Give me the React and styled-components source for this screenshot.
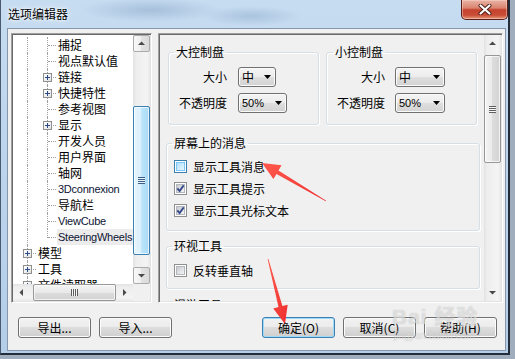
import React from 'react';
import styled, { createGlobalStyle, css } from 'styled-components';

const cjk = `"Noto Sans CJK SC", "Liberation Sans", sans-serif`;
const latin = `"Liberation Sans", "Noto Sans CJK SC", sans-serif`;

const GlobalStyle = createGlobalStyle`
  html, body { margin: 0; padding: 0; }
  body {
    width: 515px;
    height: 359px;
    overflow: hidden;
    background: #9fadbd;
    font-family: ${cjk};
    font-size: 12px;
    color: #000;
  }
`;

/* ---------- window frame ---------- */
const Stage = styled.div`
  position: relative;
  width: 515px;
  height: 359px;
`;

const Window = styled.div`
  box-sizing: border-box;
  width: 510px;
  height: 355px;
  display: flex;
  flex-direction: column;
  padding: 0 2px 2px 6px;
  border-left: 1px solid #4a5a6e;
  border-right: 2px solid #232c38;
  border-bottom: 2px solid #232c38;
  background:
    radial-gradient(ellipse 70px 12px at 150px 10px, rgba(110, 140, 178, 0.35), transparent),
    radial-gradient(ellipse 50px 10px at 250px 16px, rgba(110, 140, 178, 0.3), transparent),
    linear-gradient(180deg, #c6dcf1 0%, #bdd5ed 40%, #b5cee8 100%);
`;

const TitleBar = styled.div`
  flex: none;
  height: 28px;
  display: flex;
  align-items: flex-start;
  justify-content: space-between;
  margin: 0 -2px 0 -6px;
  padding-left: 7px;
`;

const Title = styled.span`
  line-height: 28px;
  font-size: 12px;
  text-shadow: 0 0 6px #fff, 0 0 3px #fff;
`;

const CloseButton = styled.div`
  width: 47px;
  height: 20px;
  box-sizing: border-box;
  display: flex;
  align-items: center;
  justify-content: center;
  border: 1px solid #5a1f19;
  border-top: none;
  border-radius: 0 0 5px 5px;
  background: linear-gradient(180deg, #e9b4a6 0%, #d9836f 42%, #c5422e 52%, #c94e36 80%, #e49a7c 100%);
  box-shadow: inset 0 0 0 1px rgba(255, 220, 210, 0.45);
`;

const Client = styled.div`
  flex: 1;
  display: flex;
  flex-direction: column;
  background: #f0f0f0;
  border: 1px solid #8596ad;
  padding: 4px 2px 0 3px;
`;

const Main = styled.div`
  flex: none;
  height: 270px;
  display: flex;
  gap: 6px;
`;

const sunken = css`
  box-sizing: border-box;
  border: 1px solid;
  border-color: #a0a0a0 #ffffff #ffffff #a0a0a0;
  padding: 1px;
  box-shadow: inset 1px 1px 0 #696969, inset -1px -1px 0 #e3e3e3;
`;

/* ---------- tree ---------- */
const TreeBox = styled.div`
  ${sunken};
  width: 141px;
  background: #fff;
  display: grid;
  grid-template-columns: 1fr 17px;
  grid-template-rows: 1fr 17px;
`;

const TreeBody = styled.div`
  overflow: hidden;
  padding: 2px 0 0 4px;
  display: flex;
  flex-direction: column;
`;

const TreeRow = styled.div`
  flex: none;
  height: 16px;
  display: flex;
  white-space: nowrap;
`;

const TreeCell = styled.span`
  position: relative;
  flex: none;
  width: 20px;
  height: 16px;

  &::before {
    content: '';
    position: absolute;
    left: 10px;
    top: 0;
    height: ${p => (p.$kind === 'end' ? '9px' : '16px')};
    border-left: 1px dotted #a0a0a0;
  }

  &::after {
    content: '';
    display: ${p => (p.$kind === 'line' ? 'none' : 'block')};
    position: absolute;
    left: 11px;
    top: 8px;
    width: 8px;
    border-top: 1px dotted #a0a0a0;
  }
`;

const Expander = styled.span`
  position: absolute;
  z-index: 1;
  left: 6px;
  top: 4px;
  width: 9px;
  height: 9px;
  box-sizing: border-box;
  border: 1px solid #8f8f8f;
  background: linear-gradient(135deg, #ffffff, #e2e2e2);

  &::before,
  &::after {
    content: '';
    position: absolute;
    background: #2c4a8a;
  }
  &::before { left: 1px; top: 3px; width: 5px; height: 1px; }
  &::after { left: 3px; top: 1px; width: 1px; height: 5px; }
`;

const NodeText = styled.span`
  height: 16px;
  line-height: 16px;
  padding: 0 1px;
  font-family: ${p => (p.$latin ? latin : cjk)};
  font-size: ${p => (p.$latin ? '11px' : '12px')};
  letter-spacing: ${p => (p.$latin ? '-0.25px' : '0')};
  color: ${p => (p.$latin ? '#0c1433' : '#000')};
  background: ${p => (p.$selected ? '#ececec' : 'transparent')};
`;

/* ---------- scrollbars ---------- */
const ScrollV = styled.div`
  min-height: 0;
  width: 17px;
  display: flex;
  flex-direction: column;
  background: linear-gradient(90deg, #e2e2e2 0%, #eeeeee 18%, #f4f4f4 82%, #e8e8e8 100%);
`;

const ScrollH = styled.div`
  min-width: 0;
  height: 17px;
  display: flex;
  background: linear-gradient(180deg, #e2e2e2 0%, #eeeeee 18%, #f4f4f4 82%, #e8e8e8 100%);
`;

const ScrollButton = styled.div`
  flex: none;
  width: 17px;
  height: 17px;
  box-sizing: border-box;
  display: flex;
  align-items: center;
  justify-content: center;
  border-radius: 2px;
  ${p => p.$end && (p.$horizontal ? css`margin-left: auto;` : css`margin-top: auto;`)}
  ${p =>
    p.$hot &&
    css`
      border: 1px solid #ababab;
      background: linear-gradient(90deg, #f8f8f8 0%, #eeeeee 50%, #e2e2e2 50%, #dadada 100%);
    `}
`;

const ArrowSvg = styled.svg`
  transform: rotate(${p => ({ up: 0, right: 90, down: 180, left: 270 }[p.$dir])}deg);
`;

function ScrollArrow({ dir }) {
  return (
    <ArrowSvg $dir={dir} width="7" height="7" viewBox="0 0 7 7">
      <polygon points="0,5 7,5 3.5,1.5" fill="#4a4a4a" />
    </ArrowSvg>
  );
}

const Thumb = styled.div`
  flex: none;
  box-sizing: border-box;
  display: flex;
  align-items: center;
  justify-content: center;
  border-radius: 2px;
  box-shadow: inset 0 0 0 1px rgba(255, 255, 255, 0.7);
  ${p =>
    p.$horizontal
      ? css`height: 17px; width: ${p.$size}px; margin-left: ${p.$offset}px;`
      : css`width: 17px; height: ${p.$size}px; margin-top: ${p.$offset}px;`}
  border: 1px solid ${p => (p.$hot ? '#3c7fb1' : '#979797')};
  background: ${p => {
    const d = p.$horizontal ? '180deg' : '90deg';
    return p.$hot
      ? `linear-gradient(${d}, #e5f5fd 0%, #d9f0fc 50%, #bee6fd 50%, #a7d9f5 100%)`
      : `linear-gradient(${d}, #f4f4f4 0%, #e9e9e9 50%, #dcdcdc 50%, #d3d3d3 100%)`;
  }};
`;

const Gripper = styled.span`
  display: block;
  width: 7px;
  height: 7px;
  background: repeating-linear-gradient(
    ${p => (p.$horizontal ? '90deg' : '180deg')},
    ${p => (p.$hot ? '#3b5b82' : '#5f5f5f')} 0 1px,
    ${p => (p.$hot ? '#e8f6fd' : '#f6f6f6')} 1px 2px
  );
`;

const Corner = styled.div`
  background: #f0f0f0;
`;

/* ---------- options panel ---------- */
const OptionsPanel = styled.div`
  ${sunken};
  flex: 1;
  display: flex;
  background: #f0f0f0;
  overflow: hidden;
`;

const PanelBody = styled.div`
  flex: 1;
  min-width: 0;
  overflow: hidden;
  display: flex;
  flex-direction: column;
  padding: 9px 4px 0 6px;
`;

const GroupRow = styled.div`
  flex: none;
  display: grid;
  grid-template-columns: 151px 151px;
  column-gap: 7px;
  margin-left: 2px;
`;

const Group = styled.fieldset`
  flex: none;
  margin: ${p => p.$mt || 0}px 0 0;
  padding: 0;
  min-inline-size: 0;
  border: 1px solid #d5dfe5;
  border-radius: 3px;
  box-shadow: inset 1px 1px 0 #fff, 1px 1px 0 #fff;
`;

const GroupTitle = styled.legend`
  margin-left: ${p => p.$ml ?? 5}px;
  padding: 0 2px;
  font-size: 12px;
  line-height: 16px;
`;

const FieldGrid = styled.div`
  display: grid;
  grid-template-columns: 48px auto;
  column-gap: ${p => p.$gap}px;
  row-gap: 6px;
  align-items: center;
  justify-items: start;
  padding: 7px 0 11px 10px;
`;

const FieldLabel = styled.span`
  justify-self: end;
  line-height: 20px;
`;

const Combo = styled.div`
  width: ${p => p.$w}px;
  height: 20px;
  box-sizing: border-box;
  display: flex;
  align-items: center;
  justify-content: space-between;
  padding: 0 4px 0 3px;
  border: 1px solid #707070;
  border-radius: 3px;
  background: linear-gradient(180deg, #f4f4f4 0%, #ececec 50%, #dfdfdf 50%, #d2d2d2 100%);
  box-shadow: inset 0 0 0 1px #fbfbfb;
`;

const ComboValue = styled.span`
  font-family: ${p => (p.$latin ? latin : cjk)};
  font-size: ${p => (p.$latin ? '11px' : '12px')};
  line-height: 18px;
`;

const CheckList = styled.div`
  padding: ${p => p.$pad};
`;

const CheckRow = styled.label`
  display: flex;
  align-items: center;
  gap: 6px;
  height: 22px;
  padding-left: 7px;
`;

const CheckBox = styled.span`
  position: relative;
  flex: none;
  width: 13px;
  height: 13px;
  box-sizing: border-box;
  padding: 1px;
  border: 1px solid ${p => (p.$state === 'hover' ? '#3c7fb1' : '#8e8f8f')};
  background: #fff;
`;

const BoxInner = styled.span`
  display: block;
  width: 9px;
  height: 9px;
  box-sizing: border-box;
  ${p =>
    p.$state === 'hover'
      ? css`
          border: 1px solid #79c6f9;
          background: linear-gradient(135deg, #b1dffd 0%, #e9f7fe 100%);
        `
      : css`
          border: 1px solid #b4b8bd;
          background: linear-gradient(135deg, #c6cacf 0%, #f5f5f5 100%);
        `}
`;

const CheckMark = styled.svg`
  position: absolute;
  left: -1px;
  top: -1px;
`;

/* ---------- buttons ---------- */
const ButtonBar = styled.div`
  flex: none;
  display: flex;
  gap: 8px;
  margin-top: 14px;
  padding: 0 6px 0 7px;
`;

const ButtonGroup = styled.div`
  display: flex;
  gap: 8px;
  margin-left: auto;
`;

const DialogButton = styled.button`
  width: 73px;
  height: 21px;
  padding: 0;
  box-sizing: border-box;
  font-family: ${cjk};
  font-size: 12px;
  line-height: 19px;
  color: #000;
  border: 1px solid ${p => (p.$default ? '#3c7fb1' : '#707070')};
  border-radius: 3px;
  background: linear-gradient(180deg, #f2f2f2 0%, #ebebeb 50%, #dddddd 50%, #cfcfcf 100%);
  box-shadow: inset 0 0 0 1px ${p => (p.$default ? '#9bdaf8' : '#fcfcfc')};
`;

/* ---------- annotations ---------- */
const Overlay = styled.svg`
  position: absolute;
  left: 0;
  top: 0;
  pointer-events: none;
`;

const Watermark = styled.div`
  position: absolute;
  left: 392px;
  top: 304px;
  display: flex;
  flex-direction: column;
  align-items: flex-start;
  color: rgba(255, 255, 255, 0.55);
  text-shadow: 0 0 1px rgba(110, 110, 110, 0.45);
  pointer-events: none;
`;

const WatermarkLogo = styled.span`
  font-family: ${latin};
  font-size: 21px;
  font-weight: bold;
  line-height: 26px;
  letter-spacing: 1px;
`;

const WatermarkUrl = styled.span`
  font-family: ${latin};
  font-size: 10px;
  line-height: 12px;
  margin-left: 2px;
`;

function arrowPoints(tail, tip, headLen, headHalf, tailW, neckW) {
  const [tx, ty] = tail;
  const [hx, hy] = tip;
  const len = Math.hypot(hx - tx, hy - ty);
  const ux = (hx - tx) / len;
  const uy = (hy - ty) / len;
  const nx = -uy;
  const ny = ux;
  const bx = hx - ux * headLen;
  const by = hy - uy * headLen;
  const p = (x, y) => `${x.toFixed(1)},${y.toFixed(1)}`;
  return [
    p(tx + (nx * tailW) / 2, ty + (ny * tailW) / 2),
    p(bx + (nx * neckW) / 2, by + (ny * neckW) / 2),
    p(bx + nx * headHalf, by + ny * headHalf),
    p(hx, hy),
    p(bx - nx * headHalf, by - ny * headHalf),
    p(bx - (nx * neckW) / 2, by - (ny * neckW) / 2),
    p(tx - (nx * tailW) / 2, ty - (ny * tailW) / 2),
  ].join(' ');
}

/* ---------- data ---------- */
const treeRows = [
  { cells: ['line', 'tee'], text: '捕捉' },
  { cells: ['line', 'tee'], text: '视点默认值' },
  { cells: ['line', 'tee'], text: '链接', plus: true },
  { cells: ['line', 'tee'], text: '快捷特性', plus: true },
  { cells: ['line', 'tee'], text: '参考视图' },
  { cells: ['line', 'tee'], text: '显示', plus: true },
  { cells: ['line', 'tee'], text: '开发人员' },
  { cells: ['line', 'tee'], text: '用户界面' },
  { cells: ['line', 'tee'], text: '轴网' },
  { cells: ['line', 'tee'], text: '3Dconnexion', latin: true },
  { cells: ['line', 'tee'], text: '导航栏' },
  { cells: ['line', 'tee'], text: 'ViewCube', latin: true },
  { cells: ['line', 'end'], text: 'SteeringWheels', latin: true, selected: true },
  { cells: ['tee'], text: '模型', plus: true },
  { cells: ['tee'], text: '工具', plus: true },
  { cells: ['tee'], text: '文件读取器', plus: true },
];

const wheels = [
  { title: '大控制盘', ml: 5, gap: 11, sizeW: 38, opacityW: 49 },
  { title: '小控制盘', ml: 6, gap: 10, sizeW: 50, opacityW: 50 },
];

function Check({ state }) {
  return (
    <CheckBox $state={state}>
      <BoxInner $state={state} />
      {state === 'checked' && (
        <CheckMark width="13" height="13" viewBox="0 0 13 13">
          <path d="M3.3 6.3 L5.6 9 L9.7 3.4" fill="none" stroke="#34478a" strokeWidth="1.8" />
        </CheckMark>
      )}
    </CheckBox>
  );
}

export default function App() {
  return (
    <>
      <GlobalStyle />
      <Stage>
        <Window>
          <TitleBar>
            <Title>选项编辑器</Title>
            <CloseButton>
              <svg width="14" height="11" viewBox="0 0 14 11">
                <path d="M2.5 1.5 L11.5 9.5 M11.5 1.5 L2.5 9.5" stroke="#4a1c16" strokeWidth="4" strokeLinecap="round" />
                <path d="M2.5 1.5 L11.5 9.5 M11.5 1.5 L2.5 9.5" stroke="#ffffff" strokeWidth="2.2" strokeLinecap="round" />
              </svg>
            </CloseButton>
          </TitleBar>

          <Client>
            <Main>
              <TreeBox>
                <TreeBody>
                  {treeRows.map(row => (
                    <TreeRow key={row.text}>
                      {row.cells.map((kind, i) => (
                        <TreeCell key={i} $kind={kind}>
                          {row.plus && i === row.cells.length - 1 && <Expander />}
                        </TreeCell>
                      ))}
                      <NodeText $latin={row.latin} $selected={row.selected}>
                        {row.text}
                      </NodeText>
                    </TreeRow>
                  ))}
                </TreeBody>
                <ScrollV>
                  <ScrollButton $hot>
                    <ScrollArrow dir="up" />
                  </ScrollButton>
                  <Thumb $hot $offset={54} $size={149}>
                    <Gripper $hot />
                  </Thumb>
                  <ScrollButton $hot $end>
                    <ScrollArrow dir="down" />
                  </ScrollButton>
                </ScrollV>
                <ScrollH>
                  <ScrollButton $horizontal>
                    <ScrollArrow dir="left" />
                  </ScrollButton>
                  <Thumb $horizontal $offset={3} $size={83}>
                    <Gripper $horizontal />
                  </Thumb>
                  <ScrollButton $horizontal $end>
                    <ScrollArrow dir="right" />
                  </ScrollButton>
                </ScrollH>
                <Corner />
              </TreeBox>

              <OptionsPanel>
                <PanelBody>
                  <GroupRow>
                    {wheels.map(w => (
                      <Group key={w.title}>
                        <GroupTitle $ml={w.ml}>{w.title}</GroupTitle>
                        <FieldGrid $gap={w.gap}>
                          <FieldLabel>大小</FieldLabel>
                          <Combo $w={w.sizeW}>
                            <ComboValue>中</ComboValue>
                            <svg width="7" height="4" viewBox="0 0 7 4">
                              <polygon points="0,0 7,0 3.5,4" fill="#000" />
                            </svg>
                          </Combo>
                          <FieldLabel>不透明度</FieldLabel>
                          <Combo $w={w.opacityW}>
                            <ComboValue $latin>50%</ComboValue>
                            <svg width="7" height="4" viewBox="0 0 7 4">
                              <polygon points="0,0 7,0 3.5,4" fill="#000" />
                            </svg>
                          </Combo>
                        </FieldGrid>
                      </Group>
                    ))}
                  </GroupRow>

                  <Group $mt={10}>
                    <GroupTitle>屏幕上的消息</GroupTitle>
                    <CheckList $pad="4px 0 9px">
                      <CheckRow>
                        <Check state="hover" />
                        显示工具消息
                      </CheckRow>
                      <CheckRow>
                        <Check state="checked" />
                        显示工具提示
                      </CheckRow>
                      <CheckRow>
                        <Check state="checked" />
                        显示工具光标文本
                      </CheckRow>
                    </CheckList>
                  </Group>

                  <Group $mt={7}>
                    <GroupTitle>环视工具</GroupTitle>
                    <CheckList $pad="5px 0 7px">
                      <CheckRow>
                        <Check state="plain" />
                        反转垂直轴
                      </CheckRow>
                    </CheckList>
                  </Group>

                  <Group $mt={8}>
                    <GroupTitle>漫游工具</GroupTitle>
                    <CheckList $pad="5px 0 7px">
                      <CheckRow>
                        <Check state="plain" />
                        约束漫游角度
                      </CheckRow>
                    </CheckList>
                  </Group>
                </PanelBody>
                <ScrollV>
                  <ScrollButton>
                    <ScrollArrow dir="up" />
                  </ScrollButton>
                  <Thumb $offset={3} $size={108}>
                    <Gripper />
                  </Thumb>
                  <ScrollButton $end>
                    <ScrollArrow dir="down" />
                  </ScrollButton>
                </ScrollV>
              </OptionsPanel>
            </Main>

            <ButtonBar>
              <DialogButton>导出...</DialogButton>
              <DialogButton>导入...</DialogButton>
              <ButtonGroup>
                <DialogButton $default>确定(O)</DialogButton>
                <DialogButton>取消(C)</DialogButton>
                <DialogButton>帮助(H)</DialogButton>
              </ButtonGroup>
            </ButtonBar>
          </Client>
        </Window>

        <Watermark>
          <WatermarkLogo>Bai 经验</WatermarkLogo>
          <WatermarkUrl>jingyan.baidu.com</WatermarkUrl>
        </Watermark>

        <Overlay width="515" height="359" viewBox="0 0 515 359">
          <defs>
            <linearGradient id="redArrow" x1="0" y1="0" x2="1" y2="1">
              <stop offset="0" stopColor="#ff5a4e" />
              <stop offset="1" stopColor="#ee2f2f" />
            </linearGradient>
          </defs>
          <polygon points={arrowPoints([326, 201], [262, 163], 18, 8, 0.8, 4)} fill="url(#redArrow)" />
          <polygon points={arrowPoints([268, 259], [285, 324], 18, 7.5, 0.8, 4)} fill="url(#redArrow)" />
        </Overlay>
      </Stage>
    </>
  );
}
